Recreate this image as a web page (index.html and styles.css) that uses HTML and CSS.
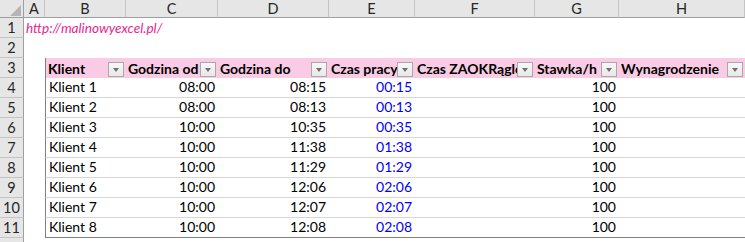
FILE: index.html
```html
<!DOCTYPE html>
<html lang="pl">
<head>
<meta charset="utf-8">
<title>Arkusz – czas pracy</title>
<link rel="stylesheet" href="styles.css">
</head>
<body>
<div class="sheet">
  <!-- column headings -->
  <div class="corner"><svg width="24" height="18" viewBox="0 0 24 18"><polygon points="21,5 21,16 10,16" fill="#b4b4b4"/></svg></div>
  <div class="colhead">A</div>
  <div class="colhead">B</div>
  <div class="colhead">C</div>
  <div class="colhead">D</div>
  <div class="colhead">E</div>
  <div class="colhead">F</div>
  <div class="colhead">G</div>
  <div class="colhead">H</div>

  <!-- row 1 -->
  <div class="rowhead">1</div>
  <div class="cell link">http://malinowyexcel.pl/</div>
  <div class="cell"></div><div class="cell"></div><div class="cell"></div><div class="cell"></div><div class="cell"></div><div class="cell"></div><div class="cell"></div>

  <!-- row 2 -->
  <div class="rowhead">2</div>
  <div class="cell"></div><div class="cell"></div><div class="cell"></div><div class="cell"></div><div class="cell"></div><div class="cell"></div><div class="cell"></div><div class="cell"></div>

  <!-- row 3: table header -->
  <div class="rowhead">3</div>
  <div class="cell"></div>
  <div class="cell th first"><span class="label">Klient</span><span class="filter"></span></div>
  <div class="cell th"><span class="label">Godzina od</span><span class="filter"></span></div>
  <div class="cell th"><span class="label">Godzina do</span><span class="filter"></span></div>
  <div class="cell th"><span class="label">Czas pracy</span><span class="filter"></span></div>
  <div class="cell th"><span class="label">Czas ZAOKRąglony</span><span class="filter"></span></div>
  <div class="cell th"><span class="label">Stawka/h</span><span class="filter"></span></div>
  <div class="cell th"><span class="label">Wynagrodzenie</span><span class="filter"></span></div>

  <div class="rowhead">4</div><div class="cell"></div>
  <div class="cell td first">Klient 1</div><div class="cell td num">08:00</div><div class="cell td num">08:15</div><div class="cell td num blue">00:15</div><div class="cell td"></div><div class="cell td num">100</div><div class="cell td"></div>

  <div class="rowhead">5</div><div class="cell"></div>
  <div class="cell td first">Klient 2</div><div class="cell td num">08:00</div><div class="cell td num">08:13</div><div class="cell td num blue">00:13</div><div class="cell td"></div><div class="cell td num">100</div><div class="cell td"></div>

  <div class="rowhead">6</div><div class="cell"></div>
  <div class="cell td first">Klient 3</div><div class="cell td num">10:00</div><div class="cell td num">10:35</div><div class="cell td num blue">00:35</div><div class="cell td"></div><div class="cell td num">100</div><div class="cell td"></div>

  <div class="rowhead">7</div><div class="cell"></div>
  <div class="cell td first">Klient 4</div><div class="cell td num">10:00</div><div class="cell td num">11:38</div><div class="cell td num blue">01:38</div><div class="cell td"></div><div class="cell td num">100</div><div class="cell td"></div>

  <div class="rowhead">8</div><div class="cell"></div>
  <div class="cell td first">Klient 5</div><div class="cell td num">10:00</div><div class="cell td num">11:29</div><div class="cell td num blue">01:29</div><div class="cell td"></div><div class="cell td num">100</div><div class="cell td"></div>

  <div class="rowhead">9</div><div class="cell"></div>
  <div class="cell td first">Klient 6</div><div class="cell td num">10:00</div><div class="cell td num">12:06</div><div class="cell td num blue">02:06</div><div class="cell td"></div><div class="cell td num">100</div><div class="cell td"></div>

  <div class="rowhead">10</div><div class="cell"></div>
  <div class="cell td first">Klient 7</div><div class="cell td num">10:00</div><div class="cell td num">12:07</div><div class="cell td num blue">02:07</div><div class="cell td"></div><div class="cell td num">100</div><div class="cell td"></div>

  <div class="rowhead">11</div><div class="cell"></div>
  <div class="cell td first last">Klient 8</div><div class="cell td num last">10:00</div><div class="cell td num last">12:08</div><div class="cell td num blue last">02:08</div><div class="cell td last"></div><div class="cell td num last">100</div><div class="cell td last"></div>

  <!-- row 12, only its top edge is in view -->
  <div class="rowhead"></div>
  <div class="cell"></div><div class="cell"></div><div class="cell"></div><div class="cell"></div><div class="cell"></div><div class="cell"></div><div class="cell"></div><div class="cell"></div>
</div>
</body>
</html>
```

FILE: styles.css
```css
html, body {
  margin: 0;
  padding: 0;
  background: #ffffff;
  overflow: hidden;
}

.sheet {
  display: grid;
  grid-template-columns: 24px 21px 81px 92px 111px 86px 120px 84px 126px;
  grid-template-rows: 18px;
  grid-auto-rows: 20px;
  width: 745px;
  font-family: Lato, "Open Sans", sans-serif;
  font-size: 14px;
  color: #000;
}

.sheet > div {
  box-sizing: border-box;
  min-width: 0;
}

/* heading strip */
.corner {
  background: #e6e6e6;
  border-right: 1px solid #9e9e9e;
  border-bottom: 1px solid #9e9e9e;
}
.corner svg { display: block; }

.colhead {
  background: #e6e6e6;
  border-right: 1px solid #c4c4c4;
  border-bottom: 1px solid #9e9e9e;
  color: #262626;
  text-align: center;
  line-height: 17px;
  font-size: 14.5px;
}

.rowhead {
  background: #e6e6e6;
  border-right: 1px solid #9e9e9e;
  border-bottom: 1px solid #c4c4c4;
  color: #262626;
  text-align: center;
  line-height: 20px;
  font-size: 14.5px;
}

/* worksheet cells */
.cell {
  white-space: nowrap;
  display: flex;
  align-items: flex-end;
  padding: 0 3px 1px 3px;
  line-height: 18px;
}

.link {
  overflow: visible;
  color: #e3288f;
  font-style: italic;
  font-size: 13.6px;
  padding-left: 2px;
}

/* table header */
.th {
  background: #f9cbe4;
  font-weight: 700;
  padding: 0 2px 0 2px;
  align-items: center;
}
.th .label {
  flex: 1;
  min-width: 0;
  overflow: hidden;
  padding-top: 1px;
}
.filter {
  flex: none;
  width: 16px;
  height: 15px;
  box-sizing: border-box;
  margin-top: 2px;
  border: 1px solid #a9a9a9;
  background: linear-gradient(#f7f7f7, #e8e8e8);
  position: relative;
}
.filter::after {
  content: "";
  position: absolute;
  left: 4px;
  top: 5px;
  border-left: 3.5px solid transparent;
  border-right: 3.5px solid transparent;
  border-top: 4px solid #6f6f6f;
}

.first {
  border-left: 1px solid #808080;
}

.td {
  border-bottom: 1px solid #d6d6d6;
}
.td.last {
  border-bottom-color: #808080;
}

.num {
  justify-content: flex-end;
}
.blue {
  color: #0000ff;
}
```
